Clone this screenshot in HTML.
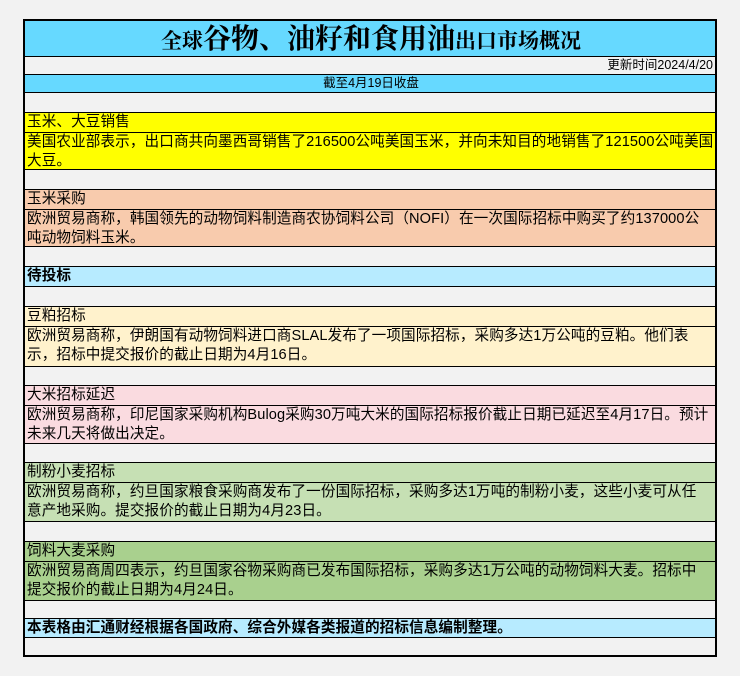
<!DOCTYPE html>
<html><head><meta charset="utf-8"><style>
*{margin:0;padding:0;box-sizing:border-box}
body{width:740px;height:676px;background:#f2f2f2;position:relative;overflow:hidden;font-family:"Liberation Sans","Noto Sans CJK SC",sans-serif;color:#000}
#box{position:absolute;left:23px;top:19px;width:694px;height:638px;border:2px solid #000;background:#f2f2f2}
.r{position:absolute;left:0;width:690px;border-bottom:1px solid #000;font-size:14.6px;line-height:19px;padding-left:2px;white-space:nowrap;overflow:hidden;letter-spacing:0.1px}
.c{line-height:19px;padding-top:0}
.b{font-weight:bold}
</style></head><body>
<div id="box">
<div class="r" style="top:0;height:36px;background:#66d9ff;text-align:center;font-family:'Liberation Serif','Noto Serif CJK SC',serif;font-weight:bold;line-height:38px;letter-spacing:0"><span style="font-size:21px">全球</span><span style="font-size:28px">谷物、油籽和食用油</span><span style="font-size:21px">出口市场概况</span></div>
<div class="r" style="top:36px;height:18px;text-align:right;font-size:12.5px;line-height:17px;padding-right:2px;letter-spacing:0">更新时间2024/4/20</div>
<div class="r" style="top:54px;height:18px;background:#66d9ff;text-align:center;font-size:12.5px;line-height:17px;letter-spacing:0">截至4月19日收盘</div>
<div class="r" style="top:72px;height:20px"></div>
<div class="r" style="top:92px;height:20px;background:#ffff00">玉米、大豆销售</div>
<div class="r c" style="top:112px;height:37px;background:#ffff00">美国农业部表示，出口商共向墨西哥销售了216500公吨美国玉米，并向未知目的地销售了121500公吨美国<br>大豆。</div>
<div class="r" style="top:149px;height:20px"></div>
<div class="r" style="top:169px;height:20px;background:#f8cbad">玉米采购</div>
<div class="r c" style="top:189px;height:37px;background:#f8cbad">欧洲贸易商称，韩国领先的动物饲料制造商农协饲料公司（NOFI）在一次国际招标中购买了约137000公<br>吨动物饲料玉米。</div>
<div class="r" style="top:226px;height:20px"></div>
<div class="r b" style="top:246px;height:20px;background:#b7ebff">待投标</div>
<div class="r" style="top:266px;height:20px"></div>
<div class="r" style="top:286px;height:20px;background:#fff2cc">豆粕招标</div>
<div class="r c" style="top:306px;height:40px;background:#fff2cc">欧洲贸易商称，伊朗国有动物饲料进口商SLAL发布了一项国际招标，采购多达1万公吨的豆粕。他们表<br>示，招标中提交报价的截止日期为4月16日。</div>
<div class="r" style="top:346px;height:19px"></div>
<div class="r" style="top:365px;height:20px;background:#fadbe0">大米招标延迟</div>
<div class="r c" style="top:385px;height:38px;background:#fadbe0">欧洲贸易商称，印尼国家采购机构Bulog采购30万吨大米的国际招标报价截止日期已延迟至4月17日。预计<br>未来几天将做出决定。</div>
<div class="r" style="top:423px;height:19px"></div>
<div class="r" style="top:442px;height:20px;background:#c6e0b4">制粉小麦招标</div>
<div class="r c" style="top:462px;height:39px;background:#c6e0b4">欧洲贸易商称，约旦国家粮食采购商发布了一份国际招标，采购多达1万吨的制粉小麦，这些小麦可从任<br>意产地采购。提交报价的截止日期为4月23日。</div>
<div class="r" style="top:501px;height:20px"></div>
<div class="r" style="top:521px;height:20px;background:#a9d08e">饲料大麦采购</div>
<div class="r c" style="top:541px;height:39px;background:#a9d08e">欧洲贸易商周四表示，约旦国家谷物采购商已发布国际招标，采购多达1万公吨的动物饲料大麦。招标中<br>提交报价的截止日期为4月24日。</div>
<div class="r" style="top:580px;height:18px"></div>
<div class="r b" style="top:598px;height:19px;background:#b7ebff">本表格由汇通财经根据各国政府、综合外媒各类报道的招标信息编制整理。</div>
</div>
</body></html>
